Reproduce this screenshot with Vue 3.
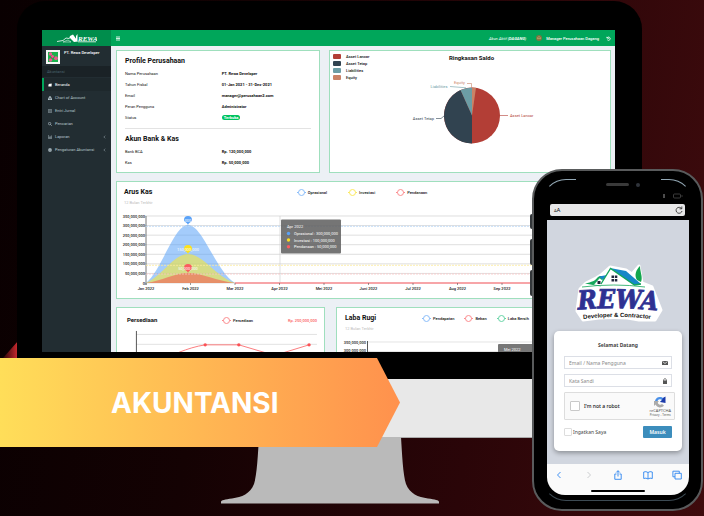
<script setup>
const menu = [
  { label: 'Beranda', icon: 'home', active: true },
  { label: 'Chart of Account', icon: 'tree' },
  { label: 'Entri Jurnal', icon: 'book' },
  { label: 'Pencarian', icon: 'search' },
  { label: 'Laporan', icon: 'chart', more: true },
  { label: 'Pengaturan Akuntansi', icon: 'gear', more: true },
]
const profile = [
  ['Nama Perusahaan', 'PT. Rewa Developer'],
  ['Tahun Fiskal', '01-Jan 2021 - 31-Des-2021'],
  ['Email', 'manager@perusahaan2.com'],
  ['Peran Pengguna', 'Administrator'],
]
const banks = [
  ['Bank BCA', 'Rp. 120,000,000'],
  ['Kas', 'Rp. 50,000,000'],
]
const pieLegend = [
  { name: 'Asset Lancar', cls: 'lancar' },
  { name: 'Asset Tetap', cls: 'tetap' },
  { name: 'Liabilities', cls: 'liab' },
  { name: 'Equity', cls: 'equity' },
]
const cashLegend = [
  { name: 'Oprasional', cls: 'blue' },
  { name: 'Investasi', cls: 'yellow' },
  { name: 'Pendanaan', cls: 'red' },
]
const profitLegend = [
  { name: 'Pendapatan', cls: 'blue' },
  { name: 'Beban', cls: 'red' },
  { name: 'Laba Bersih', cls: 'green' },
]
const amounts = ['350,000,000', '300,000,000', '250,000,000', '200,000,000', '150,000,000', '100,000,000', '50,000,000', '0']
const ticks = amounts.map((label, i) => ({ label, y: 216 + (i * 67) / 7 }))
const months = ['Jan', 'Feb', 'Mar', 'Apr', 'Mei', 'Juni', 'Jul', 'Aug', 'Sep'].map((m, i) => ({
  label: m + ' 2022',
  x: 146 + i * 44.5,
}))
const pins = [
  { cls: 'blue', y: 220, label: '300,000,000' },
  { cls: 'yellow', y: 249, label: '150,000,000' },
  { cls: 'red', y: 268, label: '50,000,000' },
]
</script>

<template>
  <main class="scene">
    <svg class="shard" viewBox="0 0 15 17" aria-hidden="true">
      <defs>
        <linearGradient id="shard"><stop offset="0" stop-color="#2a0507" /><stop offset="1" stop-color="#cf2a30" /></linearGradient>
      </defs>
      <path d="M0 17L15 0V17Z" fill="url(#shard)" />
    </svg>

    <section class="monitor">
      <div class="bezel">
        <div class="screen">
          <header class="topbar">
            <a class="brand" href="#" aria-label="REWA">
              <svg viewBox="0 0 40 9" width="40" height="9">
                <path d="M0 7.500L6 6.500L9 4L12 4.500L15 2" fill="none" stroke="#fff" stroke-width=".8" />
                <path d="M6 8L11 6L14 8Z" fill="none" stroke="#fff" stroke-width=".5" />
                <path d="M13 2L16 .500L21 7.500L17 8L12.500 3.500ZM19 6L19 2L20.500 0V7Z" fill="#fff" />
                <text x="21" y="6.500" class="brand-text">REWA</text>
                <path d="M21 7.800H39" stroke="#fff" stroke-width=".8" />
              </svg>
            </a>
            <button class="burger" aria-label="Menu"><svg viewBox="0 0 4 5" width="4" height="5"><path d="M0 1H4M0 2.500H4M0 4H4" stroke="#fff" stroke-width=".8" /></svg></button>
            <em class="account">Akun Aktif <b>(DAGANG)</b></em>
            <svg class="avatar" viewBox="0 0 6 6"><circle cx="3" cy="3" r="3" fill="#7c7340" /><path d="M1.500 4.200V2.600L3 1.500L4.500 2.600V4.200M2.500 4.200V3M3.500 4.200V3" stroke="#d7bd83" stroke-width=".5" fill="none" /></svg>
            <span class="manager">Manager Perusahaan Dagang</span>
            <svg class="logout" viewBox="0 0 6 6"><path d="M1 1V2.500H2.600M1.300 2.300A2 2 0 1 1 1.500 4.500M3 2V3.200H4" stroke="#fff" stroke-width=".9" fill="none" /></svg>
          </header>

          <div class="body">
            <nav class="sidebar">
              <div class="user">
                <svg viewBox="0 0 14 14" width="14" height="14">
                  <path d="M0 0H14V14H0Z" fill="#f6f6f6" /><path d="M2 2H12V12H2Z" fill="#19b24c" />
                  <path d="M4.500 4L6 6.500L10 8M6 6.500L4.500 10" stroke="#8b3148" stroke-width="1" fill="none" />
                  <g fill="#e75d90"><circle cx="4.500" cy="4" r="1.700" /><circle cx="6.500" cy="6.500" r="1.400" /><circle cx="10" cy="8.200" r="1.900" /><circle cx="4.500" cy="10" r="1.800" /></g>
                </svg>
                <span>PT. Rewa Developer</span>
              </div>
              <p class="menu-title">Akuntansi</p>
              <a v-for="m in menu" :key="m.label" href="#" class="item" :class="{ active: m.active }">
                <svg viewBox="0 0 10 10" class="glyph">
                  <path v-if="m.icon === 'home'" d="M0 5L5 1L7 2.500V1H9V4L10 5H9V9H1V5Z" fill="currentColor" />
                  <path v-else-if="m.icon === 'tree'" d="M3.500 0H6.500V4H9V6.500H10V10H7V6.500H8V5.200H5.600V6.500H6.600V10H3.400V6.500H4.400V5.200H2V6.500H3V10H0V6.500H1V4H3.500Z" fill="currentColor" />
                  <path v-else-if="m.icon === 'book'" d="M1 1H9V9H1ZM3 3.500H7M3 6H7" fill="none" stroke="currentColor" stroke-width="1.200" />
                  <path v-else-if="m.icon === 'search'" d="M7 4A3 3 0 1 1 1 4A3 3 0 0 1 7 4ZM6 6L9.500 9.500" fill="none" stroke="currentColor" stroke-width="1.600" />
                  <path v-else-if="m.icon === 'chart'" d="M1 0V9H10M3 8V5M5 8V2M7 8V4M9 8V1" fill="none" stroke="currentColor" stroke-width="1.200" />
                  <path v-else d="M5 0L6.500 1.500L8.500 1.500L8.700 3.500L10 5L8.700 6.500L8.500 8.500L6.500 8.700L5 10L3.500 8.700L1.500 8.500L1.300 6.500L0 5L1.300 3.500L1.500 1.500H3.500ZM5 3.500A1.500 1.500 0 1 0 5 6.500A1.500 1.500 0 1 0 5 3.500" fill="currentColor" fill-rule="evenodd" />
                </svg>
                <span>{{ m.label }}</span>
                <svg v-if="m.more" viewBox="0 0 4 6" class="more"><path d="M3 1L1 3L3 5" fill="none" stroke="currentColor" stroke-width=".7" /></svg>
              </a>
            </nav>

            <div class="content">
              <div class="row row-top">
                <section class="card profile">
                  <h2>Profile Perusahaan</h2>
                  <dl>
                    <template v-for="p in profile" :key="p[0]"><dt>{{ p[0] }}</dt><dd>{{ p[1] }}</dd></template>
                    <dt>Status</dt><dd><span class="badge">Terbuka</span></dd>
                  </dl>
                  <hr />
                  <h2>Akun Bank &amp; Kas</h2>
                  <dl>
                    <template v-for="b in banks" :key="b[0]"><dt>{{ b[0] }}</dt><dd>{{ b[1] }}</dd></template>
                  </dl>
                </section>

                <section class="card pie">
                  <ul class="pie-legend">
                    <li v-for="l in pieLegend" :key="l.name"><i :class="l.cls"></i>{{ l.name }}</li>
                  </ul>
                  <div class="pie-main">
                    <h3>Ringkasan Saldo</h3>
                    <svg viewBox="409 69 140 80" class="pie-chart">
                      <circle cx="472" cy="115.500" r="28" fill="#b33e36" />
                      <path d="M472 115.500V143.500A28 28 0 0 1 460.500 90Z" fill="#314350" />
                      <path d="M472 115.500L460.500 90A28 28 0 0 1 472 87.500Z" fill="#6c9da5" />
                      <path d="M472 115.500V87.500A28 28 0 0 1 476 87.800Z" fill="#ca8266" />
                      <g fill="none" stroke-width=".6">
                        <path d="M500 115.500H508" stroke="#b33e36" /><path d="M436 118.500H441L444 116" stroke="#314350" />
                        <path d="M450 86.500L466 87.800" stroke="#6c9da5" /><path d="M467 83.500H471.500V87.500" stroke="#ca8266" />
                      </g>
                      <g class="tiny">
                        <text x="510" y="117" fill="#b33e36">Asset Lancar</text>
                        <text x="434" y="120" fill="#314350" text-anchor="end">Asset Tetap</text>
                        <text x="447.500" y="88" fill="#6c9da5" text-anchor="end">Liabilities</text>
                        <text x="465" y="84" fill="#ca8266" text-anchor="end">Equity</text>
                      </g>
                    </svg>
                  </div>
                </section>
              </div>

              <section class="card cash">
                <div class="cash-head">
                  <h2>Arus Kas</h2>
                  <ul class="legend wide">
                    <li v-for="l in cashLegend" :key="l.name"><i :class="l.cls"></i>{{ l.name }}</li>
                  </ul>
                </div>
                <p class="sub">12 Bulan Terkhir</p>
                <svg viewBox="124 210 480 84" class="plot">
                  <g stroke="#d0d0d0" stroke-width=".7">
                    <path v-for="t in ticks" :key="t.label" :d="`M144 ${t.y}H604`" />
                    <path d="M280 216V283" />
                  </g>
                  <path d="M146 216V285" stroke="#555" stroke-width=".8" />
                  <path d="M146 283C162 270 174 225 188 225C203 225 216 272 235 283Z" fill="#5aa2f8" opacity=".55" />
                  <path d="M146 283C162 276 174 254 188 254C203 254 216 277 235 283Z" fill="#f6e63a" opacity=".6" />
                  <path d="M146 283C162 281 174 273 188 273C203 273 216 281 235 283Z" fill="#f45d55" opacity=".6" />
                  <g fill="none" stroke-width=".8" stroke-dasharray="2 1">
                    <path d="M146 226.300H604" stroke="#b8d6f8" /><path d="M146 265.300H604" stroke="#fbeb9a" /><path d="M146 274H604" stroke="#fdc5c5" />
                  </g>
                  <path d="M235 283H604" stroke="#fa8c91" stroke-width="1.500" />
                  <g class="axis">
                    <text v-for="t in ticks" :key="t.label" x="145" :y="t.y + 1.500" text-anchor="end">{{ t.label }}</text>
                    <g v-for="m in months" :key="m.label">
                      <path :d="`M${m.x} 283v2`" stroke="#555" stroke-width=".6" />
                      <text :x="m.x" y="290" text-anchor="middle">{{ m.label }}</text>
                    </g>
                  </g>
                  <g v-for="p in pins" :key="p.cls" :class="p.cls">
                    <path :d="`M188 ${p.y + 5}C187 ${p.y + 2} 184 ${p.y + 2} 184 ${p.y}A4 4 0 1 1 192 ${p.y}C192 ${p.y + 2} 189 ${p.y + 2} 188 ${p.y + 5}Z`" fill="currentColor" />
                    <text x="188" :y="p.y + 2" text-anchor="middle" class="pin">{{ p.label }}</text>
                  </g>
                  <rect x="281" y="219.500" width="60" height="34" rx="1" fill="#626262" fill-opacity=".88" />
                  <g class="tip">
                    <text x="287" y="228">Apr 2022</text>
                    <text x="294" y="235">Oprasional : 300,000,000</text>
                    <text x="294" y="241.500">Investasi : 100,000,000</text>
                    <text x="294" y="248">Pendanaan : 50,000,000</text>
                  </g>
                  <circle cx="288.500" cy="233.500" r="1.700" fill="#5aa2f8" /><circle cx="288.500" cy="240" r="1.700" fill="#fbdd20" /><circle cx="288.500" cy="246.700" r="1.700" fill="#fb5c60" />
                </svg>
              </section>

              <div class="row row-low">
                <section class="card stock">
                  <div class="stock-head">
                    <h3>Persediaan</h3>
                    <ul class="legend"><li><i class="red"></i>Persediaan</li></ul>
                    <b>Rp. 250,000,000</b>
                  </div>
                  <svg viewBox="125 329 192 34" class="plot">
                    <path d="M134 334.500H317M134 344.500H317" stroke="#d5d5d5" stroke-width=".7" />
                    <path d="M134.500 331V363" stroke="#444" stroke-width=".9" />
                    <path d="M155 362C170 356 185 348 204 345H238L265 353H283L309 345" stroke="#fb6d70" stroke-width=".9" fill="none" />
                    <g fill="#fb5155"><circle cx="204" cy="345" r="1.700" /><circle cx="238" cy="345" r="1.700" /><circle cx="309" cy="345" r="1.700" /></g>
                  </svg>
                </section>
                <section class="card profit">
                  <div class="profit-head">
                    <h2>Laba Rugi</h2>
                    <ul class="legend close"><li v-for="l in profitLegend" :key="l.name"><i :class="l.cls"></i>{{ l.name }}</li></ul>
                  </div>
                  <p class="sub">12 Bulan Terkhir</p>
                  <svg viewBox="345 337 258 26" class="plot">
                    <path d="M368 343H603M368 352.500H603" stroke="#d8d8d8" stroke-width=".7" />
                    <path d="M367.500 342V363" stroke="#444" stroke-width=".9" />
                    <g class="axis"><text x="366" y="345" text-anchor="end">350,000,000</text><text x="366" y="353" text-anchor="end">300,000,000</text></g>
                    <rect x="498" y="345" width="70" height="20" rx="1" fill="#777" /><text x="504" y="352" class="tip">Mei 2022</text>
                  </svg>
                </section>
              </div>
            </div>
          </div>
        </div>
      </div>
      <div class="chin"></div>
      <svg class="stand" viewBox="220 437 218 68" aria-hidden="true">
        <path d="M258 437H400C401 453 402 475 405 484C409 494 417 497 427 498.500C434 499.500 438 500 438 502V503.500H220V502C220 500 224 499.500 231 498.500C241 497 249 494 253 484C256 475 257 453 258 437Z" fill="#bababa" />
      </svg>
    </section>

    <div class="banner">
      <svg viewBox="0 0 400 89" preserveAspectRatio="none" aria-hidden="true">
        <defs><linearGradient id="ribbon"><stop offset="0" stop-color="#ffde59" /><stop offset="1" stop-color="#ff914d" /></linearGradient></defs>
        <path d="M0 0H377L400 44.500L377 89H0Z" fill="url(#ribbon)" />
      </svg>
      <h1>AKUNTANSI</h1>
    </div>

    <section class="phone">
      <span class="side s1"></span><span class="side s2"></span><span class="side s3"></span>
      <div class="handset">
        <div class="glare"></div>
        <div class="notch"><i></i><b></b></div>
        <div class="status">
          <svg viewBox="0 0 20 6" width="20" height="6"><path d="M1 1V5" stroke="#aaa" stroke-width=".9" /><rect x="10.500" y="1" width="7" height="4" rx="1" fill="none" stroke="#555" stroke-width=".7" /><path d="M19 2V4" stroke="#555" stroke-width=".6" /></svg>
        </div>
        <div class="url">
          <span><small>A</small>A</span>
          <svg viewBox="0 0 8 8" width="8" height="8"><path d="M6.500 2.500A3 3 0 1 0 7 5M4.500 2.800H6.800V.5" fill="none" stroke="#222" stroke-width=".8" /></svg>
        </div>
        <div class="page">
          <svg class="logo" viewBox="572 262 94 62" width="94" height="62" role="img" aria-label="REWA Developer &amp; Contractor">
            <path d="M587 283L597 278L602 275L611 267L627 270L633 274L640 266L643 283L653 287L662 310L656 320L640 320Q618 315 584 320L578 311L581 289Z" fill="#fff" stroke="#fff" stroke-width="3" stroke-linejoin="round" />
            <path d="M586 283.500C593 282 596 281 599 277L601 276L606 276L603 280L600 285H594Z" fill="#14a65a" />
            <path d="M600 276.500L608 275L604 280Z" fill="#1687c8" />
            <path d="M594.500 285L600.500 278L605 281L602 286Z" fill="#fff" stroke="#14a65a" stroke-width=".6" />
            <path d="M600 286L612 269L635 285L630 287Z" fill="#fff" />
            <path d="M611 268L627 271L642 284L635 285Z" fill="#1687c8" />
            <path d="M602 284L611.500 268.500L635.500 285L642 284" fill="none" stroke="#14a65a" stroke-width="1.300" />
            <path d="M638 280C635 275 637 270 641 266C641 272 644 277 642 282Z" fill="#13a64e" />
            <path d="M612.500 275.500H615V278H612.500ZM615.800 275.500H618.300V278H615.800ZM612.500 279H615V281.500H612.500ZM615.800 279H618.300V281.500H615.800ZM598.500 281H601.500V284H598.500Z" fill="#20263d" />
            <path d="M583 287Q615 283 646 287" stroke="#14a65a" stroke-width=".8" fill="none" />
            <path id="nameArc" d="M574 310Q618 306 664 311" fill="none" />
            <path id="tagArc" d="M576 320Q618 314 660 320" fill="none" />
            <text class="logo-name"><textPath href="#nameArc" startOffset="50%" text-anchor="middle">REWA</textPath></text>
            <text class="logo-tag"><textPath href="#tagArc" startOffset="50%" text-anchor="middle">Developer &amp; Contractor</textPath></text>
          </svg>
          <form class="login" @submit.prevent>
            <h2>Selamat Datang</h2>
            <label class="field">
              <input type="text" placeholder="Email / Nama Pengguna" aria-label="Email / Nama Pengguna" />
              <svg viewBox="0 0 6 6" width="6" height="6"><path d="M0 1H6V5H0Z" fill="#555" /><path d="M.500 1.500L3 3.500L5.500 1.500" stroke="#fff" stroke-width=".7" fill="none" /></svg>
            </label>
            <label class="field">
              <input type="password" placeholder="Kata Sandi" aria-label="Kata Sandi" />
              <svg viewBox="0 0 6 6" width="6" height="6"><path d="M1 2.500H5V6H1Z" fill="#555" /><path d="M1.700 3V1.500Q3-.500 4.300 1.500V3" stroke="#555" stroke-width=".8" fill="none" /></svg>
            </label>
            <div class="captcha">
              <label><input type="checkbox" />I'm not a robot</label>
              <div class="re">
                <svg viewBox="0 0 12 12" width="12" height="12"><path d="M1 5A5 5 0 0 1 9 2L11 1V6H6L8 4.300A2.600 2.600 0 0 0 3.500 5Z" fill="#4a90e8" /><path d="M9 2L11.500.5V7L6 6L8 4Z" fill="#1c3aa9" /><path d="M0 5H5L3.800 6.200A2.500 2.500 0 0 0 8 8L10 9.500A5 5 0 0 1 1.500 8.500L0 10Z" fill="#ababab" /></svg>
                <span>reCAPTCHA</span><small>Privacy - Terms</small>
              </div>
            </div>
            <div class="actions">
              <label><input type="checkbox" />Ingatkan Saya</label>
              <button type="submit">Masuk</button>
            </div>
          </form>
        </div>
        <div class="tools">
          <div class="tool-row">
            <button aria-label="Kembali"><svg viewBox="0 0 10 10"><path d="M6.500 2L3.500 5L6.500 8" /></svg></button>
            <button aria-label="Maju" class="off"><svg viewBox="0 0 10 10"><path d="M3.500 2L6.500 5L3.500 8" /></svg></button>
            <button aria-label="Bagikan"><svg viewBox="0 0 10 10"><path d="M3.500 4H1.800V9.300H8.200V4H6.500M5 6.500V.800M3.200 2.500L5 .700L6.800 2.500" /></svg></button>
            <button aria-label="Markah"><svg viewBox="0 0 10 10"><path d="M5 2.500Q3 1 .700 2V8.500Q3 7.500 5 9Q7 7.500 9.300 8.500V2Q7 1 5 2.500V9" /></svg></button>
            <button aria-label="Tab"><svg viewBox="0 0 10 10"><path d="M3 3.300H9.300V9H3ZM3 6.800H.900V1.200H7.300V3.300" /></svg></button>
          </div>
          <div class="home-bar"></div>
        </div>
      </div>
    </section>
  </main>
</template>

<style>
body { margin: 0; background: #150203; }
</style>

<style scoped>
* { box-sizing: border-box; }
h1, h2, h3, p, ul, dl, dd { margin: 0; padding: 0; }
ul { list-style: none; }
button, input { font: inherit; margin: 0; }
a { color: inherit; text-decoration: none; }
svg { display: block; flex: none; }

.scene {
  position: relative;
  min-height: 100vh;
  overflow: hidden;
  padding: 1px 62px 0 17px;
  background: linear-gradient(98deg, #090001 0%, #140203 32%, #2a0508 68%, #3e0b0d 100%);
  font: 4px/1.25 Roboto, sans-serif;
  color: #111;
}
.shard { position: absolute; left: 3px; top: 341px; width: 15px; }
.monitor { position: relative; }
.bezel { padding: 29px 27px 27px 25px; background: #000; border-radius: 28px 28px 0 0; }
.screen { display: flex; flex-direction: column; aspect-ratio: 573 / 322; overflow: hidden; background: #ecf0f5; }
.chin { height: 59px; background: #e8e8e8; border-bottom: 1px solid #aaa; border-radius: 0 0 24px 24px; }
.stand { width: 218px; height: 68px; margin: -1px auto 0; }

.topbar { flex: none; display: flex; align-items: center; height: 16px; padding-right: 4px; background: #00a65a; color: #fff; }
.brand { width: 69px; height: 16px; display: flex; align-items: center; padding-left: 15px; background: #008d4c; }
.brand-text { font: italic bold 7px "Liberation Serif", serif; fill: #fff; }
.burger { margin: 0 auto 0 5px; padding: 0; border: 0; background: none; }
.account { margin-right: 10px; }
.avatar { width: 6px; height: 6px; margin-right: 4px; }
.manager { margin-right: 7px; font-weight: 500; }
.logout { width: 5px; height: 5px; }

.body { flex: 1; display: flex; min-height: 0; }
.sidebar { flex: none; width: 69px; background: #222d32; color: #b8c7ce; }
.user { display: flex; gap: 4px; height: 20px; padding: 4px; color: #fff; line-height: 4px; }
.user span { padding-top: 1px; white-space: nowrap; font-weight: 500; }
.menu-title { padding-left: 5px; line-height: 11px; margin-bottom: 1px; background: #1a2226; color: #4b646f; }
.item { display: flex; align-items: center; gap: 3px; height: 13px; padding: 0 5px 0 4px; border-left: 2px solid transparent; }
.item.active { background: #1e282c; border-color: #00a65a; color: #fff; }
.glyph { width: 4px; height: 4px; }
.item span { white-space: nowrap; }
.more { width: 3px; height: 4px; margin-left: auto; }

.content { flex: 1; min-width: 0; display: grid; align-content: start; gap: 8px; padding: 4px 4px 0 5px; }
.row { display: grid; }
.row-top { grid-template-columns: 204fr 282fr; gap: 9px; }
.row-low { grid-template-columns: 209fr 275fr; gap: 11px; }
.card { min-width: 0; background: #fff; border: 1px solid #9fdfbd; }
h2 { font-size: 7px; line-height: 10px; font-weight: 700; }
h3 { font-size: 6px; line-height: 10px; font-weight: 700; }

.profile { padding: 5px 8px 4px; }
.profile dl { display: grid; grid-template-columns: 52% 1fr; margin-top: 2px; line-height: 11px; }
.profile dd { font-weight: 700; }
.badge { display: inline-block; padding: 0 2px; line-height: 5px; border-radius: 3px; background: #00c35f; color: #fff; }
.profile hr { margin: 5px 0; border: 0; border-top: 1px solid #e3e3e3; }

.pie { display: grid; grid-template-columns: 76px 1fr; padding: 2px 3px; }
.pie-legend { display: grid; align-content: start; gap: 2px; padding-top: 1px; }
.pie-legend li { display: flex; align-items: center; gap: 5px; line-height: 5px; font-weight: 500; }
.pie-legend i { width: 8px; height: 5px; border-radius: 1px; }
.lancar { background: #b33e36; } .tetap { background: #314350; } .liab { background: #6c9da5; } .equity { background: #ca8266; }
.pie-main { display: grid; justify-items: start; align-content: start; }
.pie-main h3 { margin-left: 40px; }
.pie-chart { width: 140px; height: 80px; margin-top: 6px; }
.tiny { font-size: 4px; }

.cash { padding: 5px 6px 4px 7px; }
.cash-head { display: grid; grid-template-columns: 36% 1fr; align-items: center; }
.legend { display: flex; gap: 12px; font-weight: 500; white-space: nowrap; }
.legend.wide { gap: 21px; }
.legend.close { gap: 10px; }
.legend li { display: flex; align-items: center; gap: 2px; }
.legend i { display: flex; align-items: center; justify-content: center; width: 9px; height: 5px; background: linear-gradient(currentColor, currentColor) center / 100% 1px no-repeat; opacity: .7; }
.legend i::before { content: ""; width: 5px; height: 5px; border: 1px solid currentColor; border-radius: 50%; background: #fff; }
.blue { color: #5aa2f8; } .yellow { color: #fbe11e; } .red { color: #fb5c60; } .green { color: #27c281; }
.sub { margin-top: 3px; line-height: 6px; color: #bbb; }
.plot { width: 100%; height: auto; overflow: visible; }
.cash .plot { margin-top: 4px; }
.axis { font-size: 4px; font-weight: 500; fill: #222; }
.pin { font-size: 4px; fill: #fff; }
.tip { font-size: 4px; fill: #fff; }

.stock { padding: 7px 7px 0 10px; }
.stock-head { display: grid; grid-template-columns: 95px 1fr auto; align-items: center; }
.stock-head b { color: #fb5c60; font-weight: 500; }
.stock .plot { margin-top: 4px; }
.profit { padding: 5px 7px 0 8px; }
.profit-head { display: grid; grid-template-columns: 77px 1fr; align-items: center; }
.profit .plot { margin-top: 4px; }

.banner { position: absolute; left: 0; top: 358px; display: grid; width: 400px; max-width: 100%; }
.banner svg, .banner h1 { grid-area: 1 / 1; }
.banner svg { width: 100%; height: 89px; }
.banner h1 { align-self: center; padding-left: 111px; font: 700 28px/34px Inter, sans-serif; color: #fff; }

.phone { position: absolute; right: 1px; top: 169px; width: 171px; }
.side { position: absolute; left: -2px; width: 4px; background: #33373a; border-radius: 2px; }
.s1 { top: 45px; height: 15px; } .s2 { top: 70px; height: 26px; } .s3 { top: 101px; height: 26px; }
.handset { position: relative; padding: 5px 12px 14px 13px; background: #000; border: 2px solid #595b5c; border-radius: 30px; }
.glare { position: absolute; inset: 8px; border: 1px solid transparent; border-top-color: #93a8b5; border-bottom-color: #3c4a53; border-radius: 24px; }
.notch { position: relative; display: flex; align-items: center; justify-content: center; gap: 7px; width: 85px; height: 17px; margin: 0 auto; background: #000; border-radius: 0 0 8px 8px; }
.notch i { width: 23px; height: 3px; margin-left: 9px; border-radius: 2px; background: #3a3a3a; }
.notch b { width: 4px; height: 4px; border-radius: 50%; background: #30343b; }
.status { display: flex; justify-content: flex-end; padding: 0 6px 5px 0; }
.url { position: relative; display: flex; align-items: center; justify-content: space-between; height: 12px; margin: 0 4px 4px 3px; padding: 0 2px 0 4px; border-radius: 2px; background: #e7e7e8; font-size: 6px; }
.url small { font-size: 4px; }
.page { position: relative; padding: 42px 7px 13px; background: #d1d6df; }
.logo { margin: 0 auto 7px; }
.logo-name { font: italic bold 26px "DejaVu Serif Condensed", "DejaVu Serif", serif; fill: #2e3192; stroke: #2e3192; stroke-width: .8px; }
.logo-tag { font: bold 6px "Liberation Sans", sans-serif; fill: #111; }
.login { padding: 9px 10px 13px; border-radius: 5px; background: #fff; box-shadow: 0 2px 5px #0005; font: 5px/10px "Noto Sans", sans-serif; color: #444; }
.login h2 { margin-bottom: 6px; text-align: center; font-size: 5px; }
.field { display: flex; align-items: center; height: 13px; margin-bottom: 5px; padding: 0 3px 0 4px; border: 1px solid #dcdfe6; }
.field input { flex: 1; min-width: 0; padding: 0; border: 0; outline: 0; background: none; line-height: 10px; }
.field input::placeholder { color: #8a8a8a; }
.captcha { display: flex; align-items: center; justify-content: space-between; height: 28px; margin-right: -3px; padding: 0 3px 0 5px; border: 1px solid #ddd; border-radius: 1px; background: #fafafa; }
.captcha label, .actions label { display: flex; align-items: center; }
.captcha label { gap: 4px; color: #111; font-weight: 500; }
.login input[type="checkbox"] { appearance: none; width: 10px; height: 10px; border: 1px solid #c9c9c9; border-radius: 1px; background: #fff; }
.re { display: grid; justify-items: center; font-size: 4px; line-height: 5px; color: #555; }
.re small { font-size: 3px; line-height: 4px; }
.actions { display: flex; align-items: center; justify-content: space-between; margin-top: 6px; }
.actions label { gap: 1px; }
.login .actions input { width: 8px; height: 8px; border-color: #ddd; }
.actions button { width: 29px; height: 12px; padding: 0; border: 0; border-radius: 1px; background: #3c8dbc; color: #fff; font-weight: 600; }
.tools { position: relative; padding: 6px 7px 3px; background: #fafafa; border-radius: 0 0 18px 18px; }
.tool-row { display: flex; justify-content: space-between; }
.tools button { padding: 0; border: 0; background: none; }
.tools svg { width: 10px; height: 10px; fill: none; stroke: #2e86f0; stroke-width: .9px; }
.tools .off svg { stroke: #c5c7ca; }
.home-bar { width: 54px; height: 2px; margin: 10px auto 0; border-radius: 2px; background: #000; }
</style>
